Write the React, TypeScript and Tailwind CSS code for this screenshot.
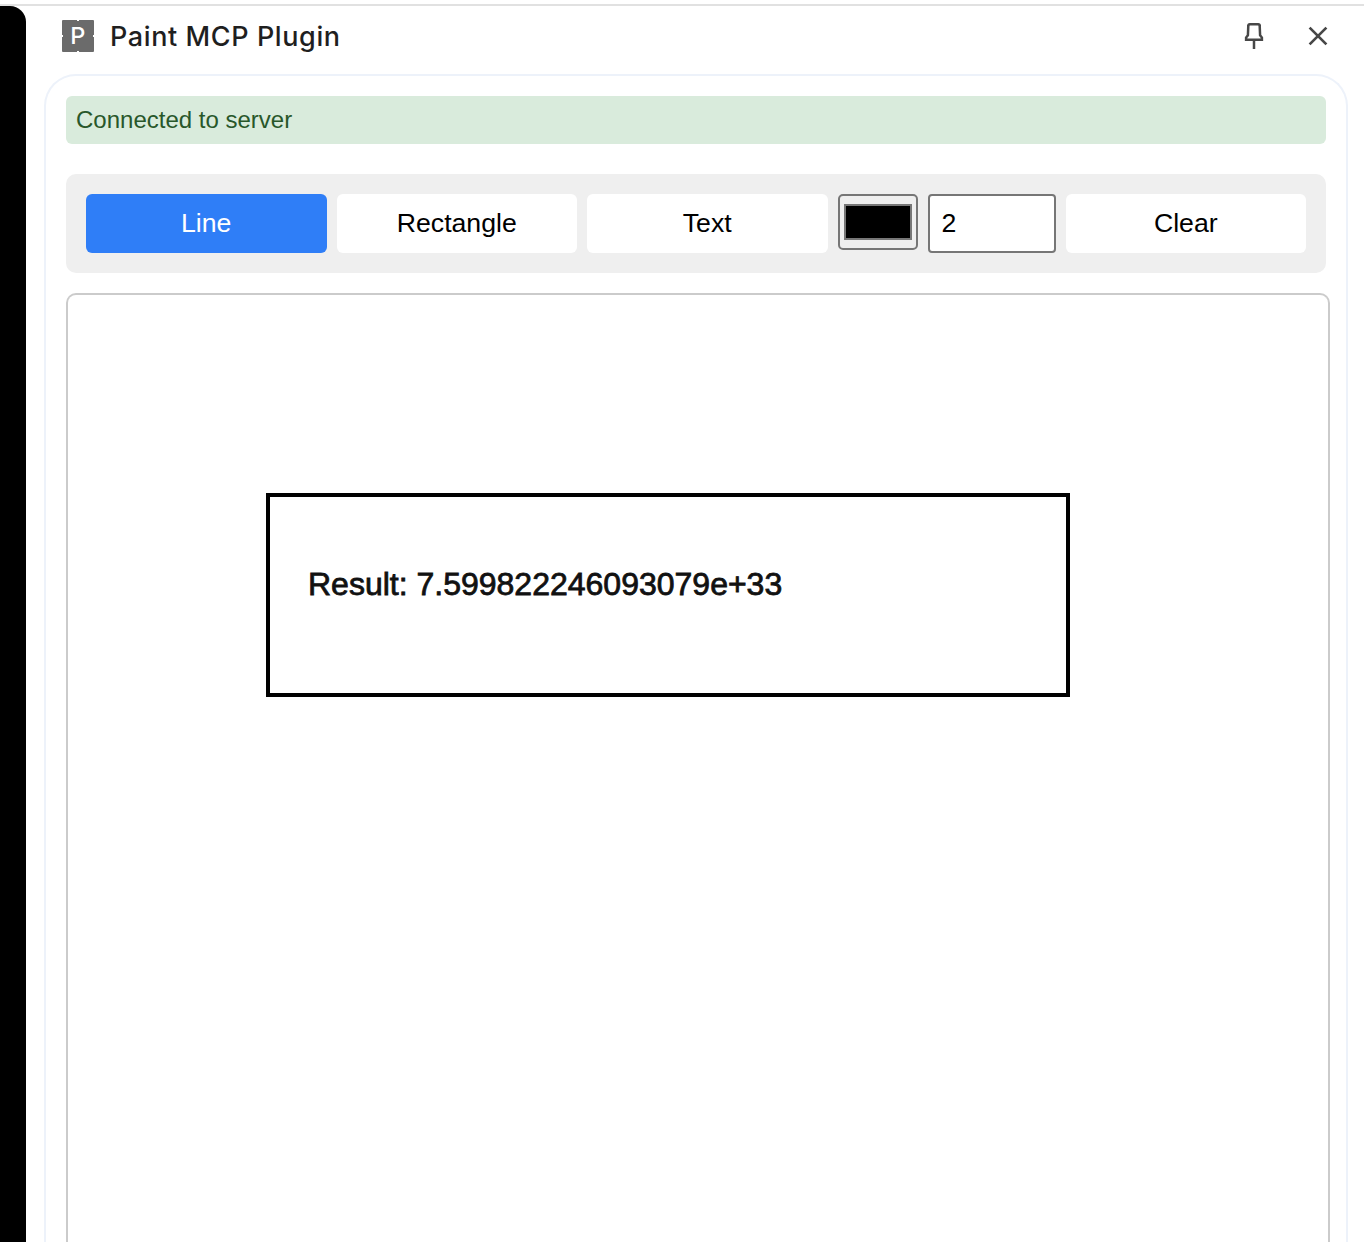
import { useState } from 'react';

type Tool = 'Line' | 'Rectangle' | 'Text';

const tools: Tool[] = ['Line', 'Rectangle', 'Text'];

function PluginBadge() {
  return (
    <svg width="32" height="32" viewBox="0 0 32 32" className="shrink-0" aria-hidden="true">
      <rect width="32" height="32" rx="1" fill="#6b6b6b" />
      <path d="M15 0h2v1h-2zM15 31h2v1h-2zM0 15h1v2H0zM31 15h1v2h-1z" fill="#fff" />
      <text x="15.8" y="24" textAnchor="middle" fontFamily="Inter, sans-serif" fontSize="23.5" fontWeight="500" fill="#fff">
        P
      </text>
    </svg>
  );
}

function PinIcon() {
  return (
    <svg width="20" height="26" viewBox="0 0 20 26" fill="none" stroke="#474747" aria-hidden="true">
      <path d="M4.3 2.9Q4.3 1.3 5.8 1.3H14.2Q15.7 1.3 15.7 2.9L16.1 12.3L17.9 14.6V16.7H2.1V14.6L3.9 12.3Z" strokeWidth="2.5" />
      <path d="M10 17V26" strokeWidth="2.5" />
    </svg>
  );
}

function CloseIcon() {
  return (
    <svg width="20" height="20" viewBox="0 0 20 20" stroke="#474747" strokeWidth="2.7" aria-hidden="true">
      <path d="M1.6 1.6L18.4 18.4M18.4 1.6L1.6 18.4" />
    </svg>
  );
}

function ToolButton({ label, active, onClick }: { label: string; active?: boolean; onClick?: () => void }) {
  return (
    <button
      onClick={onClick}
      className={
        active
          ? 'h-[59px] min-w-0 flex-1 rounded-[6px] bg-[#2f7ef7] pb-0.5 text-[26.667px] leading-[30px] text-white'
          : 'h-[59px] min-w-0 flex-1 rounded-[6px] bg-white pb-0.5 text-[26.667px] leading-[30px] text-black'
      }
    >
      {label}
    </button>
  );
}

export default function App() {
  const [tool, setTool] = useState<Tool>('Line');

  return (
    <div className="flex h-[1242px] w-full flex-col overflow-hidden bg-white pt-1 font-['Liberation_Sans',Arial,sans-serif]">
      <div className="h-0.5 shrink-0 bg-[#e1e1e1]" />
      <div className="flex min-h-0 flex-1">
        <div className="w-[26px] shrink-0 rounded-tr-[16px] bg-black" />
        <div className="flex min-w-0 flex-1 flex-col">
          <header className="flex h-[68px] shrink-0 items-start pr-[36px] pl-[36px]">
            <div className="flex h-[60px] flex-1 items-center gap-4">
              <PluginBadge />
              <h1 className="pt-0.5 font-['Inter',sans-serif] text-[27px] leading-8 font-medium tracking-[0.6px] text-[#1f1f1f]">
                Paint MCP Plugin
              </h1>
            </div>
            <div className="flex h-[60px] items-center gap-[44px]">
              <button aria-label="Pin">
                <PinIcon />
              </button>
              <button aria-label="Close">
                <CloseIcon />
              </button>
            </div>
          </header>

          <main className="mr-4 ml-[18px] flex min-h-0 flex-1 flex-col rounded-t-[32px] border-2 border-b-0 border-[#edf2fa] px-5 pt-5">
            <div className="h-12 shrink-0 rounded-[6px] bg-[#d9ebdc] px-2.5 text-2xl leading-[48px] text-[#28572a]">
              Connected to server
            </div>

            <div className="mt-[30px] flex shrink-0 items-start gap-2.5 rounded-[10px] bg-[#efefef] p-5">
              {tools.map((t) => (
                <ToolButton key={t} label={t} active={t === tool} onClick={() => setTool(t)} />
              ))}
              <button
                aria-label="Stroke color"
                className="h-14 w-20 shrink-0 rounded-[5px] border-2 border-[#767676] bg-[#efefef] px-1 py-2"
              >
                <span className="block h-full w-full border-2 border-[#777] bg-black" />
              </button>
              <input
                aria-label="Stroke width"
                defaultValue="2"
                className="h-[59px] w-32 shrink-0 rounded-[4px] border-2 border-[#767676] bg-white px-3 text-[26.667px] text-black outline-none"
              />
              <ToolButton label="Clear" />
            </div>

            <div className="mt-5 -mr-1 min-h-0 flex-1 overflow-hidden rounded-t-[10px] border-2 border-b-0 border-[#cbcbcb]">
              <svg width="1260" height="947" viewBox="0 0 1260 947" className="block">
                <rect x="200" y="200" width="800" height="200" fill="none" stroke="#000" strokeWidth="4" />
                <text
                  x="240"
                  y="300"
                  fontFamily="'Liberation Sans', Arial, sans-serif"
                  fontSize="32"
                  fill="#111"
                  stroke="#111"
                  strokeWidth="0.8"
                >
                  Result: 7.599822246093079e+33
                </text>
              </svg>
            </div>
          </main>
        </div>
      </div>
    </div>
  );
}
